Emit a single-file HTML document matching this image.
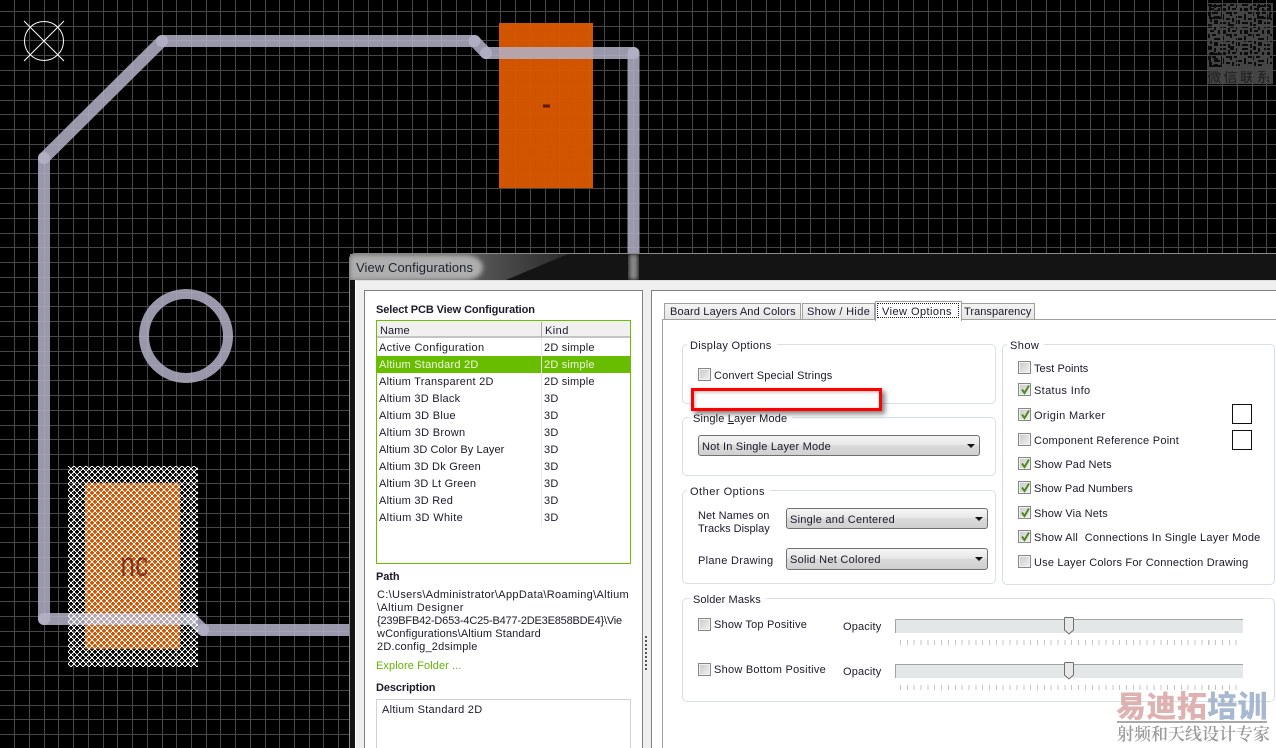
<!DOCTYPE html>
<html><head><meta charset="utf-8">
<style>
html,body{margin:0;padding:0;background:#000;}
#r{position:relative;width:1276px;height:748px;overflow:hidden;background:#000;font-family:"Liberation Sans","Noto Sans CJK SC",sans-serif;font-size:11px;color:#1a1a2a;letter-spacing:.22px}
#r div,#r span.t{position:absolute}
.t{line-height:14px;white-space:nowrap;height:14px;margin-top:1px}
.b{font-weight:bold;letter-spacing:-.1px}
.g{border:1px solid #d6e0e6;border-radius:5px;box-sizing:border-box}
.l{background:#fff;padding:0 5px 0 3px}
.c{width:13px;height:13px;box-sizing:border-box;border:1px solid #888;background:linear-gradient(135deg,#c8c8c8,#f2f2f2);box-shadow:inset 0 0 0 1px #f0f0f0}
.c svg{position:absolute;left:1px;top:0}
.s{box-sizing:border-box;border:1px solid #707070;border-radius:3px;background:linear-gradient(#f5f5f5 0,#e8e8e8 45%,#dadada 50%,#d0d0d0 100%)}
.s i{position:absolute;right:4px;top:8px;border:4px solid transparent;border-top:4px solid #111;border-bottom:0;width:0;height:0}
.tab{box-sizing:border-box;border:1px solid #a0a0a0;border-bottom:0;background:linear-gradient(#f4f4f4,#e6e6e6)}
.tk{height:5px;background:repeating-linear-gradient(90deg,#c4c4c4 0 1px,transparent 1px 6.85px)}
.tr{background:#e3e7e7;border-top:1px solid #a4a4a4;border-left:1px solid #a4a4a4;box-sizing:border-box}
</style></head><body>
<div id="r">
<svg width="1276" height="748" style="position:absolute;left:0;top:0">
<defs>
<pattern id="h" patternUnits="userSpaceOnUse" width="6" height="6" x="68" y="466">
<path shape-rendering="crispEdges" d="M1 0h1v1h-1zM2 1h1v1h-1zM3 2h1v1h-1zM4 3h1v1h-1zM5 4h1v1h-1zM0 5h1v1h-1zM4 0h1v1h-1zM3 1h1v1h-1zM2 2h1v1h-1zM1 3h1v1h-1zM0 4h1v1h-1zM5 5h1v1h-1z" fill="#fff" fill-opacity=".28"/>
<path shape-rendering="crispEdges" d="M0 0h1v1h-1zM1 1h1v1h-1zM2 2h1v1h-1zM3 3h1v1h-1zM4 4h1v1h-1zM5 5h1v1h-1zM5 0h1v1h-1zM4 1h1v1h-1zM3 2h1v1h-1zM2 3h1v1h-1zM1 4h1v1h-1zM0 5h1v1h-1z" fill="#fff"/>
</pattern>
<pattern id="q" patternUnits="userSpaceOnUse" width="22" height="22" x="1208" y="4">
<path d="M0 0h4v2h-4zM6 0h2v4h-2zM12 0h6v2h-6zM20 2h2v4h-2zM2 4h4v2h-4zM10 4h2v4h-2zM14 4h4v4h-4zM0 8h2v4h-2zM4 8h4v2h-4zM18 8h4v2h-4zM6 12h6v2h-6zM14 10h2v6h-2zM2 14h2v4h-2zM18 14h4v2h-4zM6 16h4v4h-4zM12 18h6v2h-6zM20 18h2v4h-2zM0 20h4v2h-4z" fill="#0c0c0c"/>
</pattern>
</defs>
<!-- QR -->
<rect x="1207" y="3" width="66" height="81" fill="#444"/>
<rect x="1208" y="4" width="64" height="62" fill="url(#q)"/>
<path fill-rule="evenodd" d="M1209 5h14v14h-14zM1211 7v10h10v-10zM1214 10h4v4h-4zM1257 5h14v14h-14zM1259 7v10h10v-10zM1262 10h4v4h-4zM1209 53h14v14h-14zM1211 55v10h10v-10zM1214 58h4v4h-4z" fill="#0c0c0c"/>
<text x="1207" y="82" font-family="'Noto Sans CJK SC',sans-serif" font-size="14" fill="#1e1e1e" textLength="66" letter-spacing="2.5">微信联系</text>
<!-- grid -->
<path stroke="#484848" stroke-width="1" fill="none" shape-rendering="crispEdges" d="M14.5 0V748M29.5 0V748M44.5 0V748M58.5 0V748M73.5 0V748M88.5 0V748M103.5 0V748M117.5 0V748M132.5 0V748M147.5 0V748M162.5 0V748M176.5 0V748M191.5 0V748M206.5 0V748M220.5 0V748M235.5 0V748M250.5 0V748M265.5 0V748M279.5 0V748M294.5 0V748M309.5 0V748M323.5 0V748M338.5 0V748M353.5 0V748M368.5 0V748M382.5 0V748M397.5 0V748M412.5 0V748M427.5 0V748M441.5 0V748M456.5 0V748M471.5 0V748M486.5 0V748M500.5 0V748M515.5 0V748M530.5 0V748M545.5 0V748M559.5 0V748M574.5 0V748M589.5 0V748M604.5 0V748M619.5 0V748M633.5 0V748M648.5 0V748M662.5 0V748M677.5 0V748M692.5 0V748M707.5 0V748M721.5 0V748M736.5 0V748M751.5 0V748M766.5 0V748M780.5 0V748M795.5 0V748M810.5 0V748M825.5 0V748M839.5 0V748M854.5 0V748M869.5 0V748M883.5 0V748M898.5 0V748M913.5 0V748M928.5 0V748M942.5 0V748M957.5 0V748M972.5 0V748M987.5 0V748M1001.5 0V748M1016.5 0V748M1031.5 0V748M1046.5 0V748M1060.5 0V748M1075.5 0V748M1090.5 0V748M1104.5 0V748M1119.5 0V748M1134.5 0V748M1149.5 0V748M1163.5 0V748M1178.5 0V748M1193.5 0V748M1207.5 0V748M1222.5 0V748M1237.5 0V748M1252.5 0V748M1266.5 0V748M0 11.5H1276M0 26.5H1276M0 40.5H1276M0 55.5H1276M0 70.5H1276M0 85.5H1276M0 100.5H1276M0 114.5H1276M0 129.5H1276M0 144.5H1276M0 159.5H1276M0 173.5H1276M0 188.5H1276M0 203.5H1276M0 218.5H1276M0 233.5H1276M0 247.5H1276M0 262.5H1276M0 277.5H1276M0 292.5H1276M0 306.5H1276M0 321.5H1276M0 336.5H1276M0 351.5H1276M0 365.5H1276M0 380.5H1276M0 395.5H1276M0 410.5H1276M0 425.5H1276M0 439.5H1276M0 454.5H1276M0 469.5H1276M0 483.5H1276M0 498.5H1276M0 513.5H1276M0 527.5H1276M0 542.5H1276M0 557.5H1276M0 572.5H1276M0 587.5H1276M0 601.5H1276M0 616.5H1276M0 631.5H1276M0 646.5H1276M0 661.5H1276M0 675.5H1276M0 690.5H1276M0 705.5H1276M0 719.5H1276M0 734.5H1276"/>
<!-- pads -->
<rect x="499" y="23" width="94" height="165" fill="#dc5a00" fill-opacity=".95"/>
<rect x="85" y="483" width="95" height="166" fill="#dc5a00" fill-opacity=".95"/>
<rect x="543" y="104.500" width="7" height="3" fill="#5e1408"/>
<!-- traces -->
<g stroke="#b4b2c8" stroke-opacity=".85" stroke-width="12" stroke-linecap="round" fill="none">
<path d="M44 158V619"/><path d="M44 158L162 41"/><path d="M162 41H474.500"/><path d="M474.500 41L486 53"/><path d="M486 53H633.500"/><path d="M633.500 53V300"/><path d="M44 619H192"/><path d="M192 619L203 630"/><path d="M203 630H400"/>
<circle cx="186" cy="336" r="42" stroke-width="10"/>
</g>
<!-- hatch -->
<rect x="68" y="466" width="130" height="201" fill="url(#h)"/>
<text x="120.500" y="576" font-family="'Liberation Sans',sans-serif" font-size="35" fill="#5a1408" fill-opacity=".72" textLength="28" lengthAdjust="spacingAndGlyphs">nc</text>
<!-- origin -->
<g stroke="#fff" stroke-width="1" fill="none">
<circle cx="44" cy="41" r="19.500"/><path d="M24 21L64 61M64 21L24 61"/>
</g>
</svg>

<!-- dialog frame -->
<div style="left:349px;top:253px;width:940px;height:500px;background:#141414;border:1px solid #8a8a8a;border-radius:6px 0 0 0;box-sizing:border-box"></div>
<svg width="927" height="26" style="position:absolute;left:350px;top:254px">
<defs>
<linearGradient id="sw" x1="0" x2="1" y1="0" y2="0"><stop offset="0" stop-color="#777"/><stop offset=".55" stop-color="#5a5a5a"/><stop offset="1" stop-color="#2a2a2a"/></linearGradient>
<filter id="bl"><feGaussianBlur stdDeviation="2.5"/></filter>
</defs>
<path d="M0 0H218L156 26H0Z" fill="url(#sw)"/>
<path d="M0 4Q0 1 6 1H118Q132 4 133 13Q132 24 118 26H0Z" fill="#aeaeae" filter="url(#bl)"/>
<rect x="279" y="0" width="9" height="26" fill="#8b8b8b" filter="url(#bl)"/>
</svg>
<div class="t" style="left:356px;top:260px;font-size:13px;color:#1c2430;letter-spacing:.09px">View Configurations</div>
<!-- client area -->
<div style="left:355px;top:280px;width:930px;height:480px;background:#efefef;border:1px solid #fff;border-top:1px solid #e0e0e0;box-sizing:border-box"></div>

<!-- left panel -->
<div style="left:364px;top:290px;width:279px;height:470px;background:#fff;border:1px solid #808080;box-sizing:border-box"></div>
<div class="t b" style="left:376px;top:302px">Select PCB View Configuration</div>
<div style="left:376px;top:320px;width:255px;height:244px;border:1px solid #6cbf00;box-sizing:border-box;background:#fff"></div>
<div style="left:377px;top:321px;width:253px;height:17px;background:#f0f0f0;border-bottom:2px solid #c4c4c4;box-sizing:border-box"></div>
<div style="left:541px;top:322px;width:1px;height:15px;background:#a8a8a8"></div>
<div style="left:377px;top:356px;width:253px;height:17px;background:#69bd00"></div>
<div style="left:541px;top:338px;width:1px;height:187px;background:#e8e8e8"></div>
<div class="t" style="left:380px;top:323px;letter-spacing:.1px">Name</div><div class="t" style="left:545px;top:323px;letter-spacing:.45px">Kind</div>
<div class="t" style="left:379px;top:340px;letter-spacing:.35px">Active Configuration</div><div class="t" style="left:544px;top:340px;letter-spacing:.2px">2D simple</div>
<div class="t" style="left:379px;top:357px;color:#f0f8e0;letter-spacing:.23px">Altium Standard 2D</div><div class="t" style="left:544px;top:357px;color:#f0f8e0;letter-spacing:.2px">2D simple</div>
<div class="t" style="left:379px;top:374px;letter-spacing:.25px">Altium Transparent 2D</div><div class="t" style="left:544px;top:374px;letter-spacing:.2px">2D simple</div>
<div class="t" style="left:379px;top:391px;letter-spacing:.25px">Altium 3D Black</div><div class="t" style="left:544px;top:391px">3D</div>
<div class="t" style="left:379px;top:408px;letter-spacing:.3px">Altium 3D Blue</div><div class="t" style="left:544px;top:408px">3D</div>
<div class="t" style="left:379px;top:425px;letter-spacing:.3px">Altium 3D Brown</div><div class="t" style="left:544px;top:425px">3D</div>
<div class="t" style="left:379px;top:442px;letter-spacing:.08px">Altium 3D Color By Layer</div><div class="t" style="left:544px;top:442px">3D</div>
<div class="t" style="left:379px;top:459px;letter-spacing:.23px">Altium 3D Dk Green</div><div class="t" style="left:544px;top:459px">3D</div>
<div class="t" style="left:379px;top:476px;letter-spacing:.2px">Altium 3D Lt Green</div><div class="t" style="left:544px;top:476px">3D</div>
<div class="t" style="left:379px;top:493px;letter-spacing:.25px">Altium 3D Red</div><div class="t" style="left:544px;top:493px">3D</div>
<div class="t" style="left:379px;top:510px;letter-spacing:.35px">Altium 3D White</div><div class="t" style="left:544px;top:510px">3D</div>
<div class="t b" style="left:376px;top:569px">Path</div>
<div class="t" style="left:377px;top:587px;letter-spacing:.33px">C:\Users\Administrator\AppData\Roaming\Altium</div>
<div class="t" style="left:377px;top:600px;letter-spacing:.38px">\Altium Designer</div>
<div class="t" style="left:377px;top:613px;letter-spacing:-.19px">{239BFB42-D653-4C25-B477-2DE3E858BDE4}\Vie</div>
<div class="t" style="left:377px;top:626px;letter-spacing:.12px">wConfigurations\Altium Standard</div>
<div class="t" style="left:377px;top:639px;letter-spacing:.22px">2D.config_2dsimple</div>
<div class="t" style="left:376px;top:658px;color:#62b400;letter-spacing:.1px">Explore Folder ...</div>
<div class="t b" style="left:376px;top:680px">Description</div>
<div style="left:376px;top:699px;width:255px;height:60px;border:1px solid #ccd2d6;box-sizing:border-box;background:#fff"></div>
<div class="t" style="left:382px;top:702px;letter-spacing:.28px">Altium Standard 2D</div>
<!-- grip -->
<div style="left:645px;top:636px;width:2px;height:34px;background:repeating-linear-gradient(#555 0 2px,transparent 2px 4px)"></div>

<!-- right panel -->
<div style="left:651px;top:290px;width:640px;height:470px;background:#fff;border:1px solid #808080;box-sizing:border-box"></div>
<div style="left:662px;top:319px;width:630px;height:440px;background:#fff;border:1px solid #a0a0a0;box-sizing:border-box"></div>
<div class="tab" style="left:664px;top:303px;width:137px;height:16px"></div>
<div class="tab" style="left:802px;top:303px;width:73px;height:16px"></div>
<div class="tab" style="left:961px;top:303px;width:74px;height:16px"></div>
<div style="left:875px;top:301px;width:87px;height:20px;background:#fff;border:1px solid #a0a0a0;border-bottom:0;box-sizing:border-box"></div>
<div style="left:877px;top:303px;width:82px;height:15px;border:1px dotted #222;box-sizing:border-box"></div>
<div class="t" style="left:670px;top:304px;letter-spacing:.15px">Board Layers And Colors</div>
<div class="t" style="left:807px;top:304px;letter-spacing:.35px">Show / Hide</div>
<div class="t" style="left:882px;top:304px;letter-spacing:.45px">View Options</div>
<div class="t" style="left:964px;top:304px;letter-spacing:.05px">Transparency</div>

<!-- Display Options -->
<div class="g" style="left:682px;top:344px;width:314px;height:60px"></div>
<div class="t l" style="left:687px;top:338px;letter-spacing:.3px">Display Options</div>
<div class="c" style="left:698px;top:368px"></div>
<div class="t" style="left:714px;top:368px;letter-spacing:.15px">Convert Special Strings</div>

<!-- Single layer -->
<div class="g" style="left:682px;top:417px;width:314px;height:59px"></div>
<div class="t l" style="left:690px;top:411px;letter-spacing:.15px">Single <u>L</u>ayer Mode</div>
<div class="s" style="left:698px;top:435px;width:282px;height:21px"><i></i></div>
<div class="t" style="left:702px;top:439px;letter-spacing:.2px">Not In Single Layer Mode</div>

<!-- red box -->
<div style="left:691px;top:388px;width:191px;height:23px;border:3px solid #f00;box-sizing:border-box;box-shadow:3px 3px 5px rgba(0,0,0,.5),inset 1px 1px 3px rgba(0,0,0,.3);background:#fdfdfd"></div>

<!-- Other options -->
<div class="g" style="left:682px;top:490px;width:314px;height:94px"></div>
<div class="t l" style="left:687px;top:484px;letter-spacing:.5px">Other Options</div>
<div class="t" style="left:698px;top:508px;letter-spacing:.1px">Net Names on</div>
<div class="t" style="left:698px;top:521px;letter-spacing:0">Tracks Display</div>
<div class="s" style="left:786px;top:508px;width:202px;height:21px"><i></i></div>
<div class="t" style="left:790px;top:512px;letter-spacing:.25px">Single and Centered</div>
<div class="t" style="left:698px;top:553px;letter-spacing:.3px">Plane Drawing</div>
<div class="s" style="left:786px;top:548px;width:202px;height:22px"><i></i></div>
<div class="t" style="left:790px;top:552px;letter-spacing:.27px">Solid Net Colored</div>

<!-- Show -->
<div class="g" style="left:1002px;top:344px;width:273px;height:241px"></div>
<div class="t l" style="left:1007px;top:338px;letter-spacing:.45px">Show</div>
<div class="c" style="left:1018px;top:361px"></div><div class="t" style="left:1034px;top:361px;letter-spacing:.05px">Test Points</div>
<div class="c" style="left:1018px;top:383px"><svg width="11" height="11"><path d="M2 5.500L4.500 9L9 1.500" stroke="#4f8a1e" stroke-width="2" fill="none"/></svg></div><div class="t" style="left:1034px;top:383px;letter-spacing:.35px">Status Info</div>
<div class="c" style="left:1018px;top:408px"><svg width="11" height="11"><path d="M2 5.500L4.500 9L9 1.500" stroke="#4f8a1e" stroke-width="2" fill="none"/></svg></div><div class="t" style="left:1034px;top:408px;letter-spacing:.37px">Origin Marker</div>
<div class="c" style="left:1018px;top:433px"></div><div class="t" style="left:1034px;top:433px;letter-spacing:.25px">Component Reference Point</div>
<div class="c" style="left:1018px;top:457px"><svg width="11" height="11"><path d="M2 5.500L4.500 9L9 1.500" stroke="#4f8a1e" stroke-width="2" fill="none"/></svg></div><div class="t" style="left:1034px;top:457px;letter-spacing:.15px">Show Pad Nets</div>
<div class="c" style="left:1018px;top:481px"><svg width="11" height="11"><path d="M2 5.500L4.500 9L9 1.500" stroke="#4f8a1e" stroke-width="2" fill="none"/></svg></div><div class="t" style="left:1034px;top:481px;letter-spacing:.07px">Show Pad Numbers</div>
<div class="c" style="left:1018px;top:506px"><svg width="11" height="11"><path d="M2 5.500L4.500 9L9 1.500" stroke="#4f8a1e" stroke-width="2" fill="none"/></svg></div><div class="t" style="left:1034px;top:506px;letter-spacing:.15px">Show Via Nets</div>
<div class="c" style="left:1018px;top:530px"><svg width="11" height="11"><path d="M2 5.500L4.500 9L9 1.500" stroke="#4f8a1e" stroke-width="2" fill="none"/></svg></div><div class="t" style="left:1034px;top:530px;white-space:pre;letter-spacing:.24px">Show All  Connections In Single Layer Mode</div>
<div class="c" style="left:1018px;top:555px"></div><div class="t" style="left:1034px;top:555px;letter-spacing:.2px">Use Layer Colors For Connection Drawing</div>
<div style="left:1232px;top:404px;width:20px;height:20px;border:1px solid #111;box-sizing:border-box;background:#fff"></div>
<div style="left:1232px;top:430px;width:20px;height:20px;border:1px solid #111;box-sizing:border-box;background:#fff"></div>

<!-- Solder masks -->
<div class="g" style="left:682px;top:598px;width:593px;height:104px"></div>
<div class="t l" style="left:690px;top:592px;letter-spacing:.1px">Solder Masks</div>
<div class="c" style="left:698px;top:618px"></div><div class="t" style="left:714px;top:617px;letter-spacing:.2px">Show Top Positive</div>
<div class="c" style="left:698px;top:663px"></div><div class="t" style="left:714px;top:662px;letter-spacing:.25px">Show Bottom Positive</div>
<div class="t" style="left:843px;top:619px;letter-spacing:.15px">Opacity</div>
<div class="t" style="left:843px;top:664px;letter-spacing:.15px">Opacity</div>
<div class="tr" style="left:895px;top:619px;width:348px;height:14px"></div>
<div class="tr" style="left:895px;top:664px;width:348px;height:14px"></div>
<div class="tk" style="left:900px;top:640px;width:339px"></div>
<div class="tk" style="left:900px;top:685px;width:339px"></div>
<svg width="12" height="20" style="position:absolute;left:1063px;top:616px"><path d="M1.500 2.500Q1.500 1.500 2.500 1.500H9.500Q10.500 1.500 10.500 2.500V14L6 18L1.500 14Z" fill="#e8e8e8" stroke="#6f6f6f"/></svg>
<svg width="12" height="20" style="position:absolute;left:1063px;top:661px"><path d="M1.500 2.500Q1.500 1.500 2.500 1.500H9.500Q10.500 1.500 10.500 2.500V14L6 18L1.500 14Z" fill="#e8e8e8" stroke="#6f6f6f"/></svg>

<!-- watermark -->
<div class="t" style="left:1116px;top:686px;height:34px;line-height:34px;font-family:'Noto Sans CJK SC',sans-serif;font-weight:900;font-size:30px;letter-spacing:.4px;color:#dcaaaa;opacity:.9">易迪拓<span style="color:#9fb1cb">培训</span></div>
<div style="left:1117px;top:721px;width:150px;height:2px;background:#a8a8a8"></div>
<div class="t" style="left:1117px;top:722px;height:20px;line-height:20px;font-family:'Noto Serif CJK SC',serif;font-size:17px;font-weight:600;letter-spacing:0;color:#9a9a9a">射频和天线设计专家</div>
</div>
</body></html>
